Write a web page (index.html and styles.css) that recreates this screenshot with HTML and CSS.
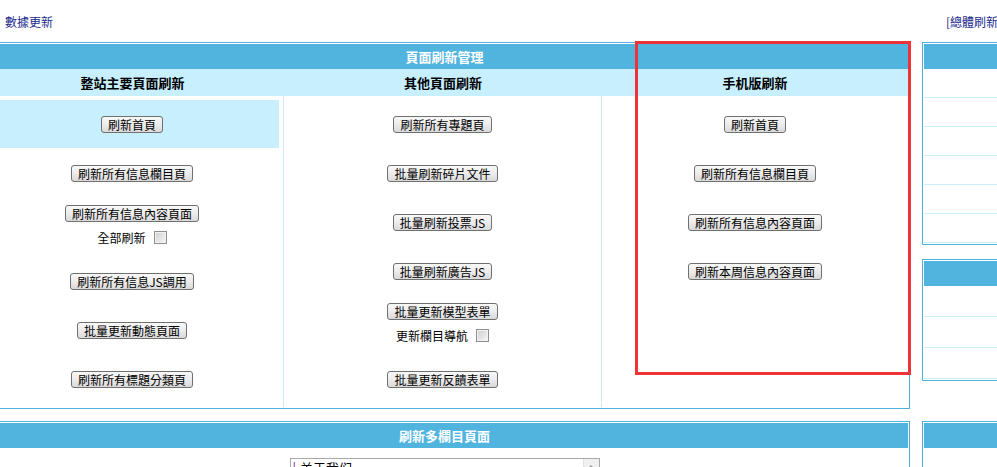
FILE: index.html
```html
<!DOCTYPE html>
<html lang="zh-Hant">
<head>
  <meta charset="UTF-8">
  <meta name="viewport" content="width=device-width, initial-scale=1.0">
  <title>數據更新</title>
  <link rel="stylesheet" href="styles.css">
</head>
<body>
  <div class="page">
    <div class="topbar topbar-main"><a href="#" class="link">數據更新</a></div>
    <div class="topbar topbar-side"><a href="#" class="link">[總體刷新]</a></div>

    <div class="main-col">
      <div class="panel">
        <div class="panel-title">頁面刷新管理</div>
        <div class="cols">
          <div class="col-head">整站主要頁面刷新</div>
          <div class="col-head">其他頁面刷新</div>
          <div class="col-head">手机版刷新</div>

          <div class="col">
            <div class="cell cell-active"><button class="btn">刷新首頁</button></div>
            <div class="cell"><button class="btn">刷新所有信息欄目頁</button></div>
            <div class="cell cell-tall">
              <button class="btn">刷新所有信息內容頁面</button>
              <label class="check-row"><span>全部刷新</span><input type="checkbox" class="check"></label>
            </div>
            <div class="cell"><button class="btn">刷新所有信息JS調用</button></div>
            <div class="cell"><button class="btn">批量更新動態頁面</button></div>
            <div class="cell"><button class="btn">刷新所有標題分類頁</button></div>
          </div>

          <div class="col">
            <div class="cell"><button class="btn">刷新所有專題頁</button></div>
            <div class="cell"><button class="btn">批量刷新碎片文件</button></div>
            <div class="cell"><button class="btn">批量刷新投票JS</button></div>
            <div class="cell"><button class="btn">批量刷新廣告JS</button></div>
            <div class="cell cell-tall">
              <button class="btn">批量更新模型表單</button>
              <label class="check-row"><span>更新欄目導航</span><input type="checkbox" class="check"></label>
            </div>
            <div class="cell"><button class="btn">批量更新反饋表單</button></div>
          </div>

          <div class="col">
            <div class="cell"><button class="btn">刷新首頁</button></div>
            <div class="cell"><button class="btn">刷新所有信息欄目頁</button></div>
            <div class="cell"><button class="btn">刷新所有信息內容頁面</button></div>
            <div class="cell"><button class="btn">刷新本周信息內容頁面</button></div>
          </div>
        </div>
      </div>

      <div class="panel panel-gap">
        <div class="panel-title">刷新多欄目頁面</div>
        <div class="multi-body">
          <div class="listbox">
            <div class="list-items">
              <div class="list-item"><span class="tree-mark">|</span>关于我们</div>
            </div>
            <div class="list-scroll"><span class="arrow-up"></span></div>
          </div>
        </div>
      </div>
    </div>

    <div class="side-col">
      <div class="panel">
        <div class="panel-title">&nbsp;</div>
        <div class="side-row"></div>
        <div class="side-row"></div>
        <div class="side-row"></div>
        <div class="side-row"></div>
        <div class="side-row"></div>
        <div class="side-row"></div>
      </div>
      <div class="panel panel-side-2">
        <div class="panel-title">&nbsp;</div>
        <div class="side-row side-row-tall"></div>
        <div class="side-row side-row-tall"></div>
        <div class="side-row side-row-tall"></div>
      </div>
      <div class="panel panel-side-3">
        <div class="panel-title">&nbsp;</div>
        <div class="side-row"></div>
      </div>
    </div>
  </div>

  <div class="marker"></div>
</body>
</html>
```

FILE: styles.css
```css
body {
  margin: 0;
  overflow: hidden;
  position: relative;
  font-family: "Noto Sans CJK TC", "Noto Sans CJK SC", sans-serif;
  font-size: 12px;
  color: #000;
  background: #fff;
}
.page {
  display: grid;
  grid-template-columns: 931px 220px;
  column-gap: 12px;
  margin-left: -21px;
  width: 1163px;
}
.topbar {
  height: 42px;
  display: flex;
  align-items: center;
  line-height: 15px;
}
.topbar-main {
  padding-left: 26px;
}
.topbar-side {
  padding-left: 24px;
}
.link {
  color: #1a2a8c;
  text-decoration: none;
}
.panel {
  border: 1px solid #4db3de;
  padding: 1px;
  background: #fff;
}
.panel-gap {
  margin-top: 12px;
}
.panel-title {
  height: 25px;
  line-height: 25px;
  background: #51b4df;
  color: #fff;
  font-weight: bold;
  font-size: 13px;
  text-align: center;
}
.cols {
  display: grid;
  grid-template-columns: 303px 318px 1fr;
}
.col-head {
  height: 27px;
  line-height: 27px;
  background: #c7effe;
  font-weight: bold;
  font-size: 13px;
  text-align: center;
}
.col {
  padding: 4px;
  display: flex;
  flex-direction: column;
  gap: 1px;
  border-right: 1px solid #cbebf8;
}
.col:last-child {
  border-right: none;
}
.cell {
  height: 48px;
  display: flex;
  flex-direction: column;
  align-items: center;
  justify-content: center;
}
.cell-tall {
  height: 58px;
  box-sizing: border-box;
  justify-content: flex-start;
  padding-top: 7px;
}
.cell-active {
  background: #c7effe;
}
.btn {
  height: 17px;
  padding: 0 6px;
  border: 1px solid #707070;
  border-radius: 3px;
  background: linear-gradient(#f8f8f8, #ececec 50%, #d9d9d9);
  font-family: inherit;
  font-size: 12px;
  line-height: 15px;
  color: #000;
}
.check-row {
  margin-top: 8px;
  display: flex;
  align-items: center;
  gap: 8px;
  line-height: 15px;
}
.check {
  appearance: none;
  margin: 0;
  width: 13px;
  height: 13px;
  border: 1px solid #8e8f8f;
  background: linear-gradient(135deg, #cfcfcf, #f7f7f7);
  box-shadow: inset 0 0 0 1px #f2f2f2;
}
.multi-body {
  padding: 10px 0;
  display: flex;
  justify-content: center;
}
.listbox {
  width: 310px;
  height: 120px;
  box-sizing: border-box;
  border: 1px solid #a9a9a9;
  display: flex;
  background: #fff;
}
.list-items {
  flex: 1;
  padding: 1px 2px;
  font-family: "Noto Sans CJK SC", sans-serif;
  font-size: 13px;
  line-height: 16px;
}
.tree-mark {
  color: #7a1a8a;
  margin-right: 4px;
}
.list-scroll {
  width: 16px;
  background: #f0f0f0;
  border-left: 1px solid #e2e2e2;
  display: flex;
  justify-content: center;
  padding-top: 6px;
  box-sizing: border-box;
}
.arrow-up {
  width: 0;
  height: 0;
  border-left: 3px solid transparent;
  border-right: 3px solid transparent;
  border-bottom: 3px solid #a0a0a0;
}
.side-row {
  height: 28px;
  border-bottom: 1px solid #c9eefc;
}
.side-row-tall {
  height: 30px;
}
.panel-side-2 {
  margin-top: 14px;
}
.panel-side-3 {
  margin-top: 40px;
}
.marker {
  position: absolute;
  left: 635px;
  top: 41px;
  width: 276px;
  height: 334px;
  box-sizing: border-box;
  border: 3px solid #ee3338;
}
```
